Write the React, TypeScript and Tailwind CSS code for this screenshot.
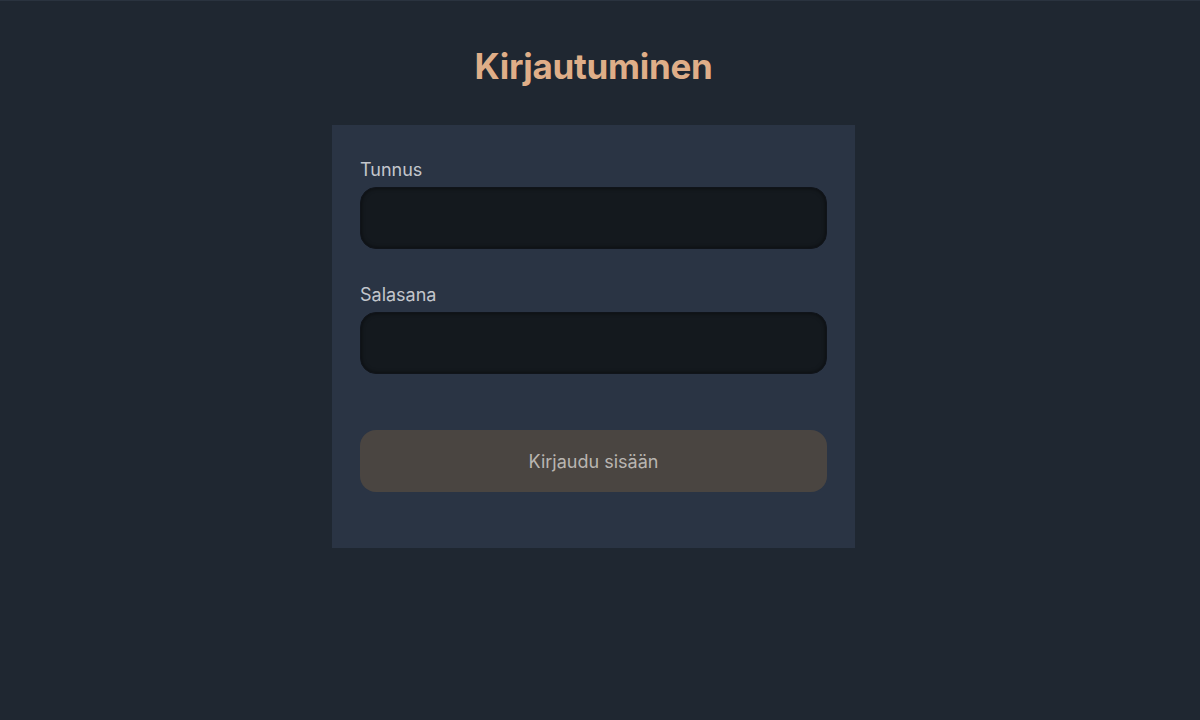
import React from "react";

const App = () => {
  return (
    <div
      className="min-h-[720px] w-full bg-[#1f2731] border-t border-[#2a333f] flex flex-col items-center pr-[13px]"
      style={{ fontFamily: '"Inter", "Noto Sans", sans-serif' }}
    >
      {/* otsikko */}
      <h1 className="mt-[43px] text-[35px] leading-[44px] font-bold text-[#dfae88] tracking-[-0.3px]">
        Kirjautuminen
      </h1>

      {/* lomake */}
      <form
        className="mt-[37px] w-[523px] bg-[#2a3444] px-[28px] pt-[33px] pb-[56px] flex flex-col"
        onSubmit={(e) => e.preventDefault()}
      >
        <label className="text-[18px] leading-[24px] text-[#c3c6cc]">Tunnus</label>
        <input
          type="text"
          className="mt-[5px] h-[62px] w-full rounded-[16px] bg-[#14191e] border border-[#10141a] shadow-[inset_0_0_4px_rgba(0,0,0,0.6)] outline-none px-4 text-[#c3c6cc]"
        />

        <label className="mt-[34px] text-[18px] leading-[24px] text-[#c3c6cc]">Salasana</label>
        <input
          type="password"
          className="mt-[5px] h-[62px] w-full rounded-[16px] bg-[#14191e] border border-[#10141a] shadow-[inset_0_0_4px_rgba(0,0,0,0.6)] outline-none px-4 text-[#c3c6cc]"
        />

        <button
          type="submit"
          className="mt-[56px] h-[62px] w-full rounded-[16px] bg-[#4a4541] text-[18px] text-[#b9b5b1]"
        >
          Kirjaudu sisään
        </button>
      </form>
    </div>
  );
};

export default App;
